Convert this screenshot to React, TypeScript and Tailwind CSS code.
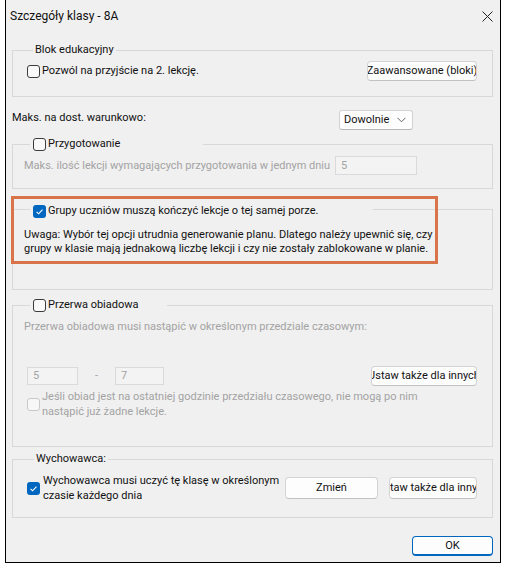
import React from "react";

function Box({ checked, disabled }: { checked?: boolean; disabled?: boolean }) {
  if (checked) {
    return (
      <span className="flex h-[13px] w-[13px] shrink-0 items-center justify-center rounded-[3px] bg-[#0067c0]">
        <svg width="13" height="13" viewBox="0 0 13 13">
          <path d="M3.6 6.9 L5.6 8.8 L9.5 4.6" fill="none" stroke="#fff" strokeWidth="1.1" />
        </svg>
      </span>
    );
  }
  return (
    <span
      className={
        disabled
          ? "h-[13px] w-[13px] shrink-0 rounded-[3px] border border-[#c8c8c8] bg-[#f7f7f7]"
          : "h-[13px] w-[13px] shrink-0 rounded-[3px] border border-[#3b3b3b] bg-[#f9f9f9]"
      }
    />
  );
}

function Btn({ children, className }: { children: React.ReactNode; className: string }) {
  return (
    <div
      className={
        "flex shrink-0 items-center justify-center overflow-hidden whitespace-nowrap rounded-[4px] border border-[#d3d3d3] border-b-[#c2c2c2] bg-[#fdfdfd] text-[#111]" +
        " " +
        className
      }
    >
      {children}
    </div>
  );
}

export default function App() {
  return (
    <div
      className="h-[569px] w-[506px] bg-white text-[11px] leading-[16px] text-[#111]"
      style={{ fontFamily: '"Segoe UI", Roboto, "Liberation Sans", sans-serif' }}
    >
      <div className="relative ml-[5px] flex h-[563px] w-[496px] flex-col border-x border-b border-black bg-[#f0f0f0] pl-[6px] pr-[7px]">
        {/* pasek tytułu */}
        <div className="-ml-[6px] -mr-[7px] flex h-[32px] items-center justify-between pl-[4px] pr-[7px] text-[12px]">
          <span>Szczegóły klasy - 8A</span>
          <svg width="11" height="11" viewBox="0 0 11 11">
            <path d="M0.5 0.5 L10.5 10.5 M10.5 0.5 L0.5 10.5" stroke="#222" strokeWidth="1" />
          </svg>
        </div>

        {/* Blok edukacyjny */}
        <fieldset className="mt-[10px] border border-[#d8d8d8] pb-[15px] pl-[14px] pr-[15px] pt-[3px]">
          <legend className="ml-[6px] px-[2px]">Blok edukacyjny</legend>
          <div className="flex h-[20px] items-center justify-between">
            <div className="flex items-center gap-[2px]">
              <Box />
              <span>Pozwól na przyjście na 2. lekcję.</span>
            </div>
            <Btn className="h-[20px] w-[110px]">Zaawansowane (bloki)</Btn>
          </div>
        </fieldset>

        <div className="mt-[13px] flex h-[20px] items-start">
          <span className="w-[327px]">Maks. na dost. warunkowo:</span>
          <div className="flex h-[20px] w-[74px] items-center justify-between rounded-[3px] border border-[#d3d3d3] border-b-[#b8b8b8] bg-[#fdfdfd] pl-[4px] pr-[6px]">
            <span>Dowolnie</span>
            <svg width="9" height="6" viewBox="0 0 9 6">
              <path d="M0.5 0.8 L4.5 4.8 L8.5 0.8" fill="none" stroke="#555" strokeWidth="0.9" />
            </svg>
          </div>
        </div>

        {/* Przygotowanie */}
        <fieldset className="mt-[6px] border border-[#d8d8d8] pb-[13px] pl-[11px] pr-[75px] pt-[4px]">
          <legend className="ml-[6px] w-[173px] px-[3px]">
            <div className="flex items-center gap-[2px]">
              <Box />
              <span>Przygotowanie</span>
            </div>
          </legend>
          <div className="flex h-[19px] items-center justify-between whitespace-nowrap text-[#a3a3a3]">
            <span>Maks. ilość lekcji wymagających przygotowania w jednym dniu</span>
            <div className="flex h-[19px] w-[82px] items-center border border-[#dadada] bg-[#f3f3f3] pl-[5px]">5</div>
          </div>
        </fieldset>

        {/* Grupy uczniów */}
        <fieldset className="mt-[11px] border border-[#d8d8d8] pb-[33px] pl-[11px] pr-[11px] pt-[9px]">
          <legend className="ml-[6px] w-[343px] px-[3px]">
            <div className="flex items-center gap-[2px] pt-[3px]">
              <Box checked />
              <span>Grupy uczniów muszą kończyć lekcje o tej samej porze.</span>
            </div>
          </legend>
          <p className="whitespace-nowrap leading-[14px]">
            Uwaga: Wybór tej opcji utrudnia generowanie planu. Dlatego należy upewnić się, czy
            <br />
            grupy w klasie mają jednakową liczbę lekcji i czy nie zostały zablokowane w planie.
          </p>
        </fieldset>

        {/* Przerwa obiadowa */}
        <fieldset className="mt-[7px] border border-[#d8d8d8] pb-[27px] pl-[11px] pr-[15px] pt-[6px]">
          <legend className="ml-[6px] w-[137px] px-[3px]">
            <div className="flex items-center gap-[2px]">
              <Box />
              <span>Przerwa obiadowa</span>
            </div>
          </legend>
          <p className="text-[#a3a3a3]">Przerwa obiadowa musi nastąpić w określonym przedziale czasowym:</p>
          <div className="mt-[31px] flex h-[20px] items-center justify-between pl-[3px]">
            <div className="flex items-center text-[#a3a3a3]">
              <div className="flex h-[18px] w-[51px] items-center border border-[#dadada] bg-[#f3f3f3] pl-[5px]">5</div>
              <span className="w-[37px] text-center">-</span>
              <div className="flex h-[18px] w-[49px] items-center border border-[#dadada] bg-[#f3f3f3] pl-[5px]">7</div>
            </div>
            <Btn className="h-[20px] w-[106px]">Ustaw także dla innych</Btn>
          </div>
          <div className="mt-[3px] flex items-center gap-[2px] pl-[3px] text-[#a3a3a3]">
            <Box disabled />
            <span className="whitespace-nowrap leading-[15px]">
              Jeśli obiad jest na ostatniej godzinie przedziału czasowego, nie mogą po nim
              <br />
              nastąpić już żadne lekcje.
            </span>
          </div>
        </fieldset>

        {/* Wychowawca */}
        <fieldset className="mt-[4px] border border-[#d8d8d8] pb-[14px] pl-[14px] pr-[15px] pt-[6px]">
          <legend className="ml-[7px] px-[2px]">Wychowawca:</legend>
          <div className="flex h-[30px] items-center">
            <div className="flex items-center gap-[3px]">
              <Box checked />
              <span className="whitespace-nowrap leading-[15px]">
                Wychowawca musi uczyć tę klasę w określonym
                <br />
                czasie każdego dnia
              </span>
            </div>
            <Btn className="ml-auto h-[22px] w-[93px]">Zmień</Btn>
            <Btn className="ml-[11px] h-[22px] w-[88px]">Ustaw także dla innych</Btn>
          </div>
        </fieldset>

        <div className="mt-[18px] flex justify-end">
          <div className="flex h-[20px] w-[81px] items-center justify-center rounded-[4px] border border-b-2 border-[#0067c0] bg-[#fdfdfd]">
            OK
          </div>
        </div>

        {/* zaznaczenie */}
        <div className="pointer-events-none absolute left-[5px] top-[196px] h-[68px] w-[427px] border-[3px] border-[#d9744a]" />
      </div>
    </div>
  );
}
